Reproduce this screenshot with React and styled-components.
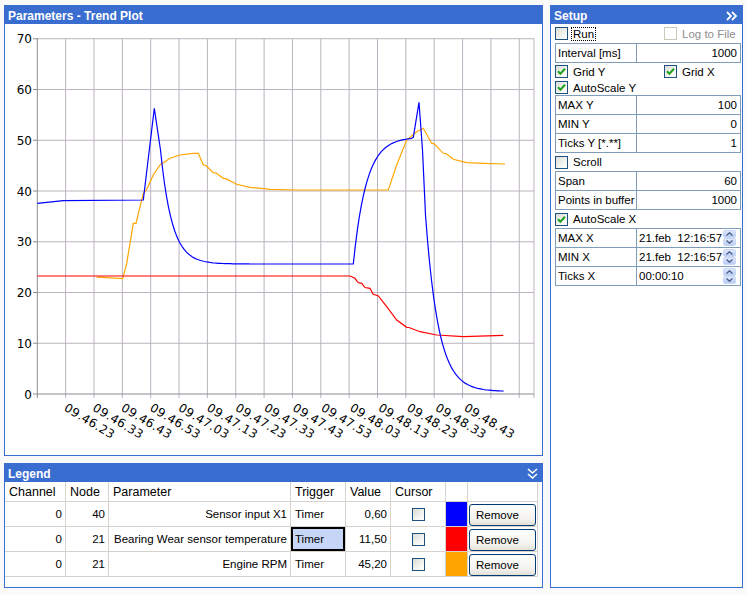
import React from "react";
import styled, { createGlobalStyle } from "styled-components";

const BLUE = "#3a6dd0";

const GlobalStyle = createGlobalStyle`
  body {
    margin: 0;
    background: #fafafa;
    font-family: "Liberation Sans", Arial, sans-serif;
    font-size: 11px;
    color: #000;
  }
`;

const Page = styled.div`
  display: flex;
  gap: 7px;
  width: 747px;
  height: 595px;
  padding: 5px 0 0 4px;
  box-sizing: border-box;
`;

const LeftCol = styled.div`
  display: flex;
  flex-direction: column;
  gap: 7px;
  width: 539px;
`;

const Panel = styled.div`
  display: flex;
  flex-direction: column;
  width: ${(p) => p.$w}px;
  height: ${(p) => p.$h}px;
  border: 1px solid ${BLUE};
  background: #fff;
  box-sizing: border-box;
  overflow: hidden;
`;

const TitleBar = styled.div`
  display: flex;
  align-items: center;
  justify-content: space-between;
  height: 18px;
  flex: none;
  padding: 1px 4px 0 3px;
  box-sizing: border-box;
  background: ${BLUE};
  color: #fff;
  font-weight: bold;
  font-size: 12px;
`;

const ChartBody = styled.div`
  flex: 1;
  display: flex;
`;

/* ---------- chart ---------- */

const X0 = 37.3;
const XS = 28.35;
const Y0 = 394;
const YS = 5.075;

// exponential segment from x1 to x2, starting at y1 and heading to target
const expSeg = (x1, x2, y1, target, tau, step = 2) => {
  const out = [];
  for (let x = x1; x <= x2 + 0.01; x += step) {
    out.push([x, target + (y1 - target) * Math.exp(-(x - x1) / tau)]);
  }
  return out;
};

const blue = [
  [37.3, 203.3], [63.3, 200.7], [143.3, 200], [154.3, 108.3],
  ...expSeg(160.5, 350, 150, 264, 11.5),
  [353.3, 264],
  ...expSeg(353.3, 412, 264, 137, 13),
  [413.3, 137.3], [419, 102.3], [422.5, 150],
  ...expSeg(425.5, 504, 215, 391.5, 13),
];

const orange = [
  [96.7, 277.2], [122.7, 278.7], [126.7, 263.3], [133.3, 223.3], [136, 223.3],
  [143.3, 193.3], [146.7, 189.3], [153.3, 175], [160, 165], [170, 158.3],
  [180, 155], [193.3, 153.3], [198.3, 153.3], [203.3, 165], [206, 165.5], [213.3, 172.7],
  [216, 173], [223.3, 178.3], [226, 178.6], [236.7, 184.3], [250, 187.3], [270, 189.3], [296.7, 190],
  [388.3, 190], [396.7, 165], [406.7, 140], [416.7, 131.7], [423.3, 128.3],
  [431.7, 143.3], [434, 143.6], [443.3, 153.3], [446, 153.6], [453.3, 159.3], [466.7, 162.7], [483.3, 163.3],
  [505, 164],
];

const red = [
  [37.3, 276], [350, 276], [355, 278.3], [358, 282.5], [361.7, 283.3], [365, 287.5], [370, 288.3],
  [373, 294], [378.3, 296], [386.7, 306.7], [396.7, 320], [406.7, 327.3], [409, 327.5], [420, 331.7],
  [436.7, 335], [463.3, 336.7], [503.3, 335.3],
];

const xLabels = [
  "09.46.23", "09.46.33", "09.46.43", "09.46.53", "09.47.03", "09.47.13",
  "09.47.23", "09.47.33", "09.47.43", "09.47.53", "09.48.03", "09.48.13",
  "09.48.23", "09.48.33", "09.48.43",
];

const pts = (a) => a.map((p) => `${p[0].toFixed(1)},${p[1].toFixed(1)}`).join(" ");

const TrendChart = () => {
  const vLines = Array.from({ length: 17 }, (_, i) => X0 + (i + 1) * XS);
  const hVals = [10, 20, 30, 40, 50, 60, 70];
  return (
    <svg width="537" height="431" viewBox="5 24 537 431">
      <g stroke="#bbb3bf" strokeWidth="1">
        {vLines.map((x) => (
          <line key={x} x1={x} y1={38.5} x2={x} y2={398} />
        ))}
        {hVals.map((v) => (
          <line key={v} x1={X0} y1={Y0 - v * YS} x2={534} y2={Y0 - v * YS} />
        ))}
        <line x1={534} y1={38.5} x2={534} y2={398} />
      </g>
      <g stroke="#8e8a92" strokeWidth="1">
        <line x1={X0} y1={38} x2={X0} y2={398} />
        <line x1={33} y1={Y0} x2={534} y2={Y0} />
        {hVals.map((v) => (
          <line key={v} x1={33} y1={Y0 - v * YS} x2={X0} y2={Y0 - v * YS} />
        ))}
      </g>
      <g fontFamily="'DejaVu Sans', Verdana, sans-serif" fontSize="12" fill="#000">
        {[0, ...hVals].map((v) => (
          <text key={v} x={32} y={Y0 - v * YS + 4.5} textAnchor="end">
            {v}
          </text>
        ))}
        {xLabels.map((t, i) => {
          const ax = 66.7 + i * 28.57 - 3.5;
          const ay = 410;
          return (
            <text key={t} x={ax} y={ay} transform={`rotate(31 ${ax} ${ay})`} letterSpacing="0.4">
              {t}
            </text>
          );
        })}
      </g>
      <polyline points={pts(orange)} fill="none" stroke="#ffa500" strokeWidth="1.2" />
      <polyline points={pts(red)} fill="none" stroke="#ff0000" strokeWidth="1.2" />
      <polyline points={pts(blue)} fill="none" stroke="#0000ff" strokeWidth="1.2" />
    </svg>
  );
};

/* ---------- checkboxes ---------- */

const Box = styled.span`
  display: inline-flex;
  align-items: center;
  justify-content: center;
  flex: none;
  width: 13px;
  height: 13px;
  box-sizing: border-box;
  border: 1px solid ${(p) => (p.$disabled ? "#cac8bb" : "#1c5180")};
  background: ${(p) =>
    p.$disabled ? "#fff" : "linear-gradient(135deg, #dcdcd5 0%, #f4f4f0 60%, #fff 100%)"};
`;

const CheckBox = ({ checked, disabled }) => (
  <Box $disabled={disabled}>
    {checked && (
      <svg width="9" height="9" viewBox="0 0 9 9">
        <path d="M1 4.2 L3.4 6.8 L8 1.8" stroke="#21a121" strokeWidth="2" fill="none" />
      </svg>
    )}
  </Box>
);

const CheckRow = styled.div`
  display: flex;
  align-items: center;
  height: ${(p) => p.$h}px;
  padding-left: 4px;
  flex: none;
`;

const CheckItem = styled.div`
  display: flex;
  align-items: center;
  gap: 5px;
  width: ${(p) => (p.$w ? `${p.$w}px` : "auto")};
  color: ${(p) => (p.$disabled ? "#8e8e8e" : "#000")};
  font-size: 11.5px;
`;

const FocusLabel = styled.span`
  border: 1px dotted #000;
  padding: 0 1px;
  line-height: 12px;
  margin-left: -2px;
`;

/* ---------- setup tables ---------- */

const PropTable = styled.div`
  display: grid;
  grid-template-columns: 80px 1fr;
  grid-auto-rows: 18px;
  gap: 1px;
  margin: 0 1px 0 4px;
  border: 1px solid #7f9db9;
  background: #7f9db9;
  flex: none;
`;

const PropCell = styled.div`
  display: flex;
  align-items: center;
  justify-content: ${(p) => (p.$right ? "flex-end" : "flex-start")};
  padding: 0 3px 0 2px;
  background: #fff;
  font-size: 11.5px;
  white-space: pre;
`;

const Spin = styled.div`
  display: flex;
  flex-direction: column;
  margin-left: auto;
  margin-right: 1px;
  width: 13px;
  height: 16px;
`;

const SpinHalf = styled.div`
  flex: 1;
  display: flex;
  align-items: center;
  justify-content: center;
  border: 1px solid #c8d6f7;
  border-radius: 2px;
  background: linear-gradient(#dfe8fd, #b9ccf6);
`;

const Arrow = ({ down }) => (
  <svg width="7" height="4" viewBox="0 0 7 4">
    <path
      d={down ? "M0.5 0.5 L3.5 3.2 L6.5 0.5" : "M0.5 3.5 L3.5 0.8 L6.5 3.5"}
      stroke="#4d6185"
      strokeWidth="1.4"
      fill="none"
    />
  </svg>
);

const Spinner = () => (
  <Spin>
    <SpinHalf>
      <Arrow />
    </SpinHalf>
    <SpinHalf>
      <Arrow down />
    </SpinHalf>
  </Spin>
);

const SetupBody = styled.div`
  display: flex;
  flex-direction: column;
`;

/* ---------- legend ---------- */

const cols = [61, 43, 182, 55, 45, 55, 22, 70];

const LegendGrid = styled.div`
  display: grid;
  grid-template-columns: ${cols.map((c) => `${c}px`).join(" ")};
  grid-template-rows: 20px repeat(3, 25px);
`;

const HeadCell = styled.div`
  display: flex;
  align-items: center;
  padding: 0 4px;
  border-right: 1px solid #d6d3cc;
  border-bottom: 1px solid #d6d3cc;
  font-size: 12.5px;
  color: #000;
`;

const Cell = styled.div`
  display: flex;
  align-items: center;
  justify-content: ${(p) =>
    p.$align === "right" ? "flex-end" : p.$align === "center" ? "center" : "flex-start"};
  padding: ${(p) => (p.$flush ? "0" : "0 3px 0 4px")};
  border-right: 1px solid #d6d3cc;
  border-bottom: 1px solid #d6d3cc;
  font-size: 11.5px;
  background: ${(p) => p.$bg || "#fff"};
  box-shadow: ${(p) => (p.$selected ? "inset 0 0 0 2px #000" : "none")};
`;

const RemoveButton = styled.button`
  width: 67px;
  height: 22px;
  margin: 1px 0 0 1px;
  padding: 0 0 0 6px;
  text-align: left;
  border: 1px solid #003c74;
  border-radius: 3px;
  background: linear-gradient(#ffffff, #f3f2ee 70%, #e3e0d8);
  font-family: "Liberation Sans", Arial, sans-serif;
  font-size: 11.5px;
  color: #000;
`;

const legendRows = [
  { ch: 0, node: 40, param: "Sensor input X1", value: "0,60", color: "#0000ff" },
  { ch: 0, node: 21, param: "Bearing Wear sensor temperature", value: "11,50", color: "#ff0000", sel: true },
  { ch: 0, node: 21, param: "Engine RPM", value: "45,20", color: "#ffa500" },
];

const DoubleRight = () => (
  <svg width="12" height="10" viewBox="0 0 12 10">
    <path d="M1 1 L5 5 L1 9 M6 1 L10 5 L6 9" stroke="#fff" strokeWidth="1.8" fill="none" />
  </svg>
);

const DoubleDown = () => (
  <svg width="11" height="12" viewBox="0 0 11 12">
    <path d="M1 1 L5.5 5 L10 1 M1 6 L5.5 10 L10 6" stroke="#fff" strokeWidth="1.6" fill="none" />
  </svg>
);

const App = () => (
  <>
    <GlobalStyle />
    <Page>
      <LeftCol>
        <Panel $w={539} $h={451}>
          <TitleBar>Parameters - Trend Plot</TitleBar>
          <ChartBody>
            <TrendChart />
          </ChartBody>
        </Panel>
        <Panel $w={539} $h={125}>
          <TitleBar>
            Legend
            <DoubleDown />
          </TitleBar>
          <LegendGrid>
            {["Channel", "Node", "Parameter", "Trigger", "Value", "Cursor", "", ""].map((h, i) => (
              <HeadCell key={i}>{h}</HeadCell>
            ))}
            {legendRows.map((r, i) => (
              <React.Fragment key={i}>
                <Cell $align="right">{r.ch}</Cell>
                <Cell $align="right">{r.node}</Cell>
                <Cell $align="right">{r.param}</Cell>
                <Cell $bg={r.sel ? "#c6d6f6" : undefined} $selected={r.sel}>
                  Timer
                </Cell>
                <Cell $align="right">{r.value}</Cell>
                <Cell $align="center">
                  <CheckBox />
                </Cell>
                <Cell $flush $bg={r.color} />
                <Cell $flush>
                  <RemoveButton>Remove</RemoveButton>
                </Cell>
              </React.Fragment>
            ))}
          </LegendGrid>
        </Panel>
      </LeftCol>

      <Panel $w={193} $h={583}>
        <TitleBar>
          Setup
          <DoubleRight />
        </TitleBar>
        <SetupBody>
          <CheckRow $h={19}>
            <CheckItem $w={109}>
              <CheckBox />
              <FocusLabel>Run</FocusLabel>
            </CheckItem>
            <CheckItem $disabled>
              <CheckBox disabled />
              Log to File
            </CheckItem>
          </CheckRow>
          <PropTable>
            <PropCell>Interval [ms]</PropCell>
            <PropCell $right>1000</PropCell>
          </PropTable>
          <CheckRow $h={17}>
            <CheckItem $w={109}>
              <CheckBox checked />
              Grid Y
            </CheckItem>
            <CheckItem>
              <CheckBox checked />
              Grid X
            </CheckItem>
          </CheckRow>
          <CheckRow $h={15}>
            <CheckItem>
              <CheckBox checked />
              AutoScale Y
            </CheckItem>
          </CheckRow>
          <PropTable>
            <PropCell>MAX Y</PropCell>
            <PropCell $right>100</PropCell>
            <PropCell>MIN Y</PropCell>
            <PropCell $right>0</PropCell>
            <PropCell>Ticks Y [*.**]</PropCell>
            <PropCell $right>1</PropCell>
          </PropTable>
          <CheckRow $h={18}>
            <CheckItem>
              <CheckBox />
              Scroll
            </CheckItem>
          </CheckRow>
          <PropTable>
            <PropCell>Span</PropCell>
            <PropCell $right>60</PropCell>
            <PropCell>Points in buffer</PropCell>
            <PropCell $right>1000</PropCell>
          </PropTable>
          <CheckRow $h={18}>
            <CheckItem>
              <CheckBox checked />
              AutoScale X
            </CheckItem>
          </CheckRow>
          <PropTable>
            <PropCell>MAX X</PropCell>
            <PropCell>
              {"21.feb  12:16:57"}
              <Spinner />
            </PropCell>
            <PropCell>MIN X</PropCell>
            <PropCell>
              {"21.feb  12:16:57"}
              <Spinner />
            </PropCell>
            <PropCell>Ticks X</PropCell>
            <PropCell>
              00:00:10
              <Spinner />
            </PropCell>
          </PropTable>
        </SetupBody>
      </Panel>
    </Page>
  </>
);

export default App;
